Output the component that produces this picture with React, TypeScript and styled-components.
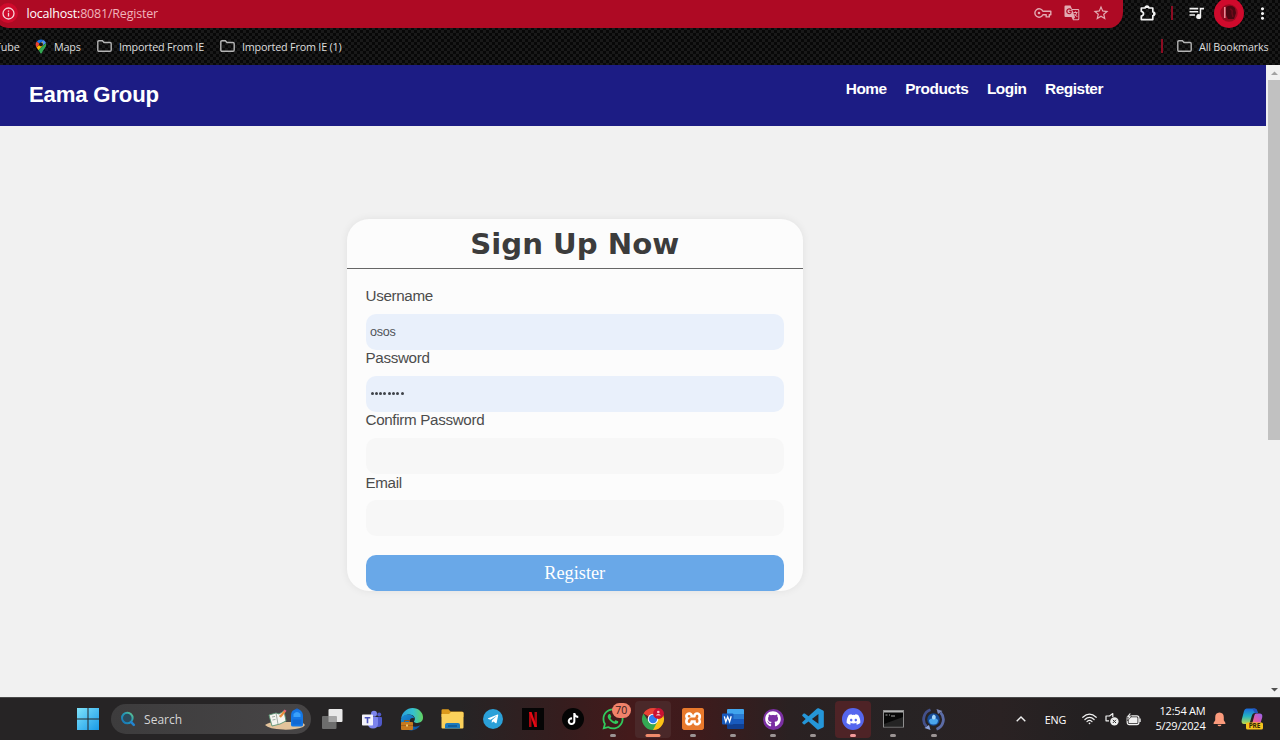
import React from 'react';
import styled, { createGlobalStyle } from 'styled-components';
import { MdMoreVert, MdStarOutline } from 'react-icons/md';
import { FaDiscord, FaGithub, FaTelegramPlane, FaTiktok, FaWhatsapp } from 'react-icons/fa';
import { SiXampp } from 'react-icons/si';
import { BiLogoVisualStudio } from 'react-icons/bi';

const GlobalStyle = createGlobalStyle`
  * { box-sizing: border-box; }
  body { margin: 0; overflow: hidden; background: #f1f1f1; }
`;

const ui = `"Open Sans", "Noto Sans", sans-serif`;
const arial = `"Liberation Sans", Arial, sans-serif`;

const Screen = styled.div`
  width: 1280px;
  height: 740px;
  display: flex;
  flex-direction: column;
  overflow: hidden;
`;

/* ---------- Browser chrome ---------- */

const Chrome = styled.div`
  height: 65px;
  flex: none;
  background-color: #090909;
  background-image: conic-gradient(#191919 25%, #080808 0 50%, #191919 0 75%, #080808 0);
  background-size: 6px 6px;
  font-family: ${ui};
`;

const AddressRow = styled.div`
  height: 28px;
  display: flex;
  align-items: flex-start;
`;

const Omnibox = styled.div`
  width: 1129px;
  height: 28px;
  margin-left: -6px;
  padding: 0 13px 2px 5px;
  display: flex;
  align-items: center;
  background: #ae0a24;
  border-radius: 0 0 14px 14px / 0 0 16px 16px;
  color: #f0b3bb;
`;

const InfoBadge = styled.div`
  width: 20px;
  height: 20px;
  margin-right: 8.5px;
  margin-left: -1px;
  border-radius: 50%;
  background: #cf0a2c;
  display: flex;
  align-items: center;
  justify-content: center;
`;

const Url = styled.div`
  flex: 1;
  font-size: 12.5px;
  letter-spacing: -0.2px;
  white-space: nowrap;
  span { color: #fff; }
`;

const OmniboxIcons = styled.div`
  display: flex;
  align-items: center;
  gap: 12px;
  color: #e3abb2;
`;

const BrowserActions = styled.div`
  height: 26px;
  display: flex;
  align-items: center;
  color: #f2f2f2;
`;

const Action = styled.div<{ $w: number; $shift?: number }>`
  width: ${(p) => p.$w}px;
  padding-left: ${(p) => p.$shift ?? 0}px;
  display: flex;
  justify-content: center;
`;

const RedDivider = styled.div`
  width: 2px;
  height: 14px;
  background: #8c0c22;
`;

const Avatar = styled.div`
  width: 30px;
  height: 30px;
  flex: none;
  border-radius: 50%;
  background: #cf0a2c;
  display: flex;
  align-items: center;
  justify-content: center;
`;

const BookmarkRow = styled.div`
  height: 36px;
  display: flex;
  align-items: center;
  color: #dedede;
  font-size: 10.8px;
`;

const Bookmark = styled.div<{ $w: number; $indent?: number; $end?: boolean }>`
  width: ${(p) => p.$w}px;
  padding-left: ${(p) => p.$indent ?? 0}px;
  display: flex;
  align-items: center;
  justify-content: ${(p) => (p.$end ? 'flex-end' : 'flex-start')};
  padding-right: ${(p) => (p.$end ? 15.5 : 0)}px;
  gap: 7px;
  letter-spacing: -0.2px;
  white-space: nowrap;
  flex: none;
`;

const Spacer = styled.div`
  flex: 1;
`;

/* ---------- Page ---------- */

const Viewport = styled.div`
  height: 632px;
  flex: none;
  display: flex;
  background: #f1f1f1;
`;

const Page = styled.div`
  width: 1266px;
  font-family: ${arial};
`;

const Header = styled.header`
  height: 61px;
  padding: 0 163px 0 29px;
  display: flex;
  justify-content: space-between;
  background: #1c1c84;
  color: #fff;
  font-weight: bold;
`;

const Brand = styled.div`
  font-size: 22.2px;
  letter-spacing: -0.2px;
  line-height: 60px;
`;

const Nav = styled.nav`
  display: flex;
  gap: 18.6px;
  font-size: 15.4px;
  letter-spacing: -0.46px;
  line-height: 18px;
  padding-top: 15px;
`;

const Card = styled.form`
  width: 455.5px;
  height: 372.5px;
  margin: 92.5px 0 0 347px;
  border-radius: 22px;
  background: #fcfcfc;
  box-shadow: 0 0 8px rgba(0, 0, 0, 0.07);
`;

const CardTitle = styled.h1`
  height: 50.5px;
  margin: 0;
  border-bottom: 1px solid #666;
  font: bold 29.2px/51px "DejaVu Sans", Verdana, sans-serif;
  color: #3c3c3c;
  text-align: center;
`;

const Fields = styled.div`
  padding: 18px 18.5px 0;
  display: flex;
  flex-direction: column;
`;

const Field = styled.label`
  height: 62.2px;
  font-size: 15.2px;
  letter-spacing: -0.33px;
  line-height: 17px;
  color: #4c4c4c;
  display: flex;
  flex-direction: column;
  gap: 9.8px;
`;

const Input = styled.div<{ $filled?: boolean }>`
  height: 36px;
  flex: none;
  padding: 0 4.5px;
  border-radius: 10px;
  background: ${(p) => (p.$filled ? '#e9f0fb' : '#f7f7f7')};
  color: #505358;
  font-size: 12.6px;
  letter-spacing: -0.3px;
  line-height: 36px;
`;

const Dots = styled.div`
  height: 35px;
  display: flex;
  align-items: center;
  gap: 1.3px;
  padding-left: 0.5px;
`;

const Dot = styled.i`
  width: 3px;
  height: 3px;
  border-radius: 50%;
  background: #3f4349;
`;

const Submit = styled.div`
  height: 36.5px;
  margin-top: 18.8px;
  border-radius: 10px;
  background: #69a8e8;
  color: #fff;
  font: 18.3px/36px "Liberation Serif", "Times New Roman", serif;
  text-align: center;
`;

const Scrollbar = styled.div`
  width: 14px;
  padding-left: 2px;
  background: #f1f1f1;
  display: flex;
  flex-direction: column;
  align-items: stretch;
`;

const ScrollArrow = styled.div`
  height: 15px;
  display: flex;
  align-items: center;
  justify-content: center;
`;

const Thumb = styled.div`
  height: 360px;
  background: #c1c1c1;
`;

/* ---------- Taskbar ---------- */

const Taskbar = styled.div`
  height: 43px;
  flex: none;
  padding-left: 68px;
  display: flex;
  border-top: 1px solid #4a4a4a;
  background: linear-gradient(90deg, #262425 0, #262425 460px, #351d1e 560px, #441a1b 630px, #3d1b1c 700px, #2a2122 790px, #272324 900px, #2a2223 1000px, #232021 1090px);
  color: #fff;
  font-family: ${ui};
`;

const Slot = styled.div<{ $active?: string; $running?: string }>`
  position: relative;
  width: 40.1px;
  height: 42px;
  flex: none;
  display: flex;
  align-items: center;
  justify-content: center;
  &::before {
    content: '';
    position: absolute;
    inset: 3px 2px 2px;
    border-radius: 4px;
    background: ${(p) => p.$active ?? 'transparent'};
  }
  &::after {
    content: '';
    position: absolute;
    left: 50%;
    bottom: 3.5px;
    width: ${(p) => (p.$running === '#f08a6c' ? 15 : 6)}px;
    height: 2.6px;
    border-radius: 2px;
    transform: translateX(-50%);
    background: ${(p) => p.$running ?? 'transparent'};
  }
  svg { position: relative; display: block; }
`;

const Search = styled.div`
  width: 200px;
  height: 30px;
  margin: 6px 1px 0 3px;
  padding: 0 5px 0 9px;
  border-radius: 15px;
  background: linear-gradient(90deg, #3d3c3d, #474546);
  display: flex;
  align-items: center;
  gap: 8px;
  font-size: 12px;
  color: #d6d6d6;
`;

const Disc = styled.div<{ $bg: string; $size?: number; $radius?: string }>`
  position: relative;
  width: ${(p) => p.$size ?? 21}px;
  height: ${(p) => p.$size ?? 21}px;
  border-radius: ${(p) => p.$radius ?? '50%'};
  background: ${(p) => p.$bg};
  display: flex;
  align-items: center;
  justify-content: center;
`;

const XamppTile = styled.div`
  position: relative;
  width: 22px;
  height: 22px;
  border-radius: 4px;
  background: radial-gradient(circle, #fff 0 9px, #e8792c 10px);
  color: #e8792c;
`;

const CountBadge = styled.div`
  position: absolute;
  z-index: 1;
  left: 19px;
  top: 5px;
  width: 19px;
  height: 15px;
  border-radius: 8px;
  background: #f0826a;
  color: #37211d;
  font-size: 10.5px;
  line-height: 15px;
  text-align: center;
`;

const TrayItem = styled.div<{ $w: number; $end?: number }>`
  width: ${(p) => p.$w}px;
  padding-right: ${(p) => p.$end ?? 0}px;
  display: flex;
  align-items: center;
  justify-content: center;
  flex: none;
  font-size: 10.8px;
  letter-spacing: -0.1px;
`;

const Clock = styled.div`
  width: 61.5px;
  flex: none;
  padding-top: 6px;
  text-align: right;
  font-size: 11px;
  line-height: 14.5px;
  letter-spacing: -0.22px;
  white-space: nowrap;
`;

/* ---------- Icons ---------- */

const KeyIcon = () => (
  <svg width="18" height="12" viewBox="0 0 18 12" fill="none" stroke="currentColor" strokeWidth="1.4">
    <path d="M8.900 4.300H16.800V7.700H15.300V9.900H12.200V7.700H8.900A4.200 4.200 0 1 1 8.900 4.300Z" strokeLinejoin="round" />
    <circle cx="5" cy="6" r="1.300" fill="currentColor" stroke="none" />
  </svg>
);

const TranslateIcon = () => (
  <svg width="16" height="16" viewBox="0 0 16 16" fill="none">
    <path d="M1.500.5H6.500L8 4H14Q15.300 4 15.300 5.300V14Q15.300 15.300 14 15.300H9L7.500 12H1.500Q.5 12 .5 11V1.500Q.5.5 1.500.5" fill="currentColor" />
    <path d="M8.300 5H13.800Q14.300 5 14.300 5.500V13.800Q14.300 14.300 13.800 14.300H9.500L11 12.500Z" fill="#ae0a24" />
    <path d="M7.200 4.800Q5.500 3.200 3.700 4.400 2 6 3.400 7.900 5.300 9.500 7 7.900L7.200 6.400H5.200" stroke="#ae0a24" strokeWidth="1.100" />
    <path d="M9.500 7.500H13.500M11.500 6.400V7.500M12.800 7.500Q12.300 10 10.200 11.500M10.500 9 13.300 12" stroke="currentColor" />
  </svg>
);

const ExtensionIcon = () => (
  <svg width="18" height="18" viewBox="0 0 18 18" fill="none" stroke="currentColor" strokeWidth="1.700" strokeLinejoin="round">
    <path d="M2.300 4H6.200Q6.300 2.100 8 2.100T9.800 4H13.800V8Q15.800 8.200 15.800 9.800T13.800 11.600V15.600H2.300V12.200Q4.500 11.700 4.500 9.800T2.300 7.400Z" />
    <path d="M6.900 3.200h2.200M14.800 8.700v2.200" strokeWidth="1.500" />
  </svg>
);

const MediaIcon = () => (
  <svg width="16" height="13" viewBox="0 0 16 13" fill="currentColor">
    <path d="M.5.800H9.200V2.400H.5ZM.5 4H9.200V5.600H.5ZM.5 7.200H6V8.800H.5Z" />
    <path d="M10.700.800H15V2.500H12.200V9.500A2.500 2.500 0 1 1 10.700 7.300Z" />
  </svg>
);

const Folder = () => (
  <svg width="15" height="12" viewBox="0 0 15 12" fill="none" stroke="#b5b5b5" strokeWidth="1.4">
    <path d="M.8 2Q.8.8 2 .8H5.4L7 2.5H13Q14.2 2.5 14.2 3.7V10Q14.2 11.2 13 11.2H2Q.8 11.2.8 10Z" />
  </svg>
);

const MapsPin = () => (
  <svg width="12" height="15" viewBox="0 0 12 15">
    <path d="M6 .5A5.2 5.2 0 0 0 1.8 2.6L4.3 4.8 8.3 1Q7.2.5 6 .5" fill="#1a73e8" />
    <path d="M8.3 1A5.2 5.2 0 0 1 11 4L7.6 6.8 4.6 4.5Z" fill="#4d91ef" />
    <path d="M1.8 2.6A5.2 5.2 0 0 0 1.6 8.6L4.8 4.9Z" fill="#ea4335" />
    <path d="M1.6 8.6 7.4 2.8 8 6.5 3.4 11.2Q2.5 9.8 1.6 8.6" fill="#fbbc04" />
    <path d="M11 4Q11.8 6.6 9.8 9.2 7.5 12 6.6 14.5H5.5Q4.8 12.8 3.4 11.1Z" fill="#34a853" />
    <circle cx="6" cy="5.4" r="1.9" fill="#171717" />
  </svg>
);

const AvatarArt = () => (
  <svg width="18" height="18" viewBox="0 0 18 18">
    <circle cx="9" cy="9" r="8.7" fill="#970a20" />
    <path d="M6 3q5-3 9 1l1 5-2 6H8L6 11Z" fill="#4a0711" />
    <path d="M4.800 3V14" stroke="#f09aa4" strokeWidth="1.4" />
    <path d="M10 5q3 1 2 4l1 4" stroke="#6b0a1a" strokeWidth="1.5" fill="none" />
  </svg>
);

const StartIcon = () => (
  <svg width="22" height="22" viewBox="0 0 22 22">
    <defs>
      <linearGradient id="win" x1="0" y1="0" x2="1" y2="1">
        <stop stopColor="#7fe3fb" />
        <stop offset="1" stopColor="#1899e8" />
      </linearGradient>
    </defs>
    <path d="M0 0h10.5v10.5H0ZM11.5 0H22v10.5H11.5ZM0 11.5h10.5V22H0ZM11.5 11.5H22V22H11.5Z" fill="url(#win)" />
  </svg>
);

const SearchIcon = () => (
  <svg width="16" height="16" viewBox="0 0 16 16" fill="none">
    <defs>
      <linearGradient id="mag" x1="0" y1="1" x2="1" y2="0">
        <stop stopColor="#1673b8" />
        <stop offset=".6" stopColor="#269bb5" />
        <stop offset="1" stopColor="#66c88a" />
      </linearGradient>
    </defs>
    <circle cx="7.3" cy="7" r="5.3" fill="#2c4a5c" stroke="url(#mag)" strokeWidth="2" />
    <path d="m11.200 11.200 2.600 2.600" stroke="#2385d0" strokeWidth="2.5" strokeLinecap="round" />
  </svg>
);

const SearchArt = () => (
  <svg width="42" height="22" viewBox="0 0 42 22">
    <path d="M1 17q4-3 11-3h24q4 1 5 3l-2 2q-8 3-20 2.6Q5 21 1 17" fill="#e3c39b" />
    <path d="m5 7 7-2 3 1 5-3 2 10-6 3-8 2Z" fill="#f5f5ef" stroke="#5b9474" strokeWidth=".9" />
    <path d="m12 5 2 11M8 9l3-.6M8.5 12l3-.6M15 8l4-1.3" stroke="#8b9a92" strokeWidth=".8" />
    <path d="m16 9 5-6" stroke="#e98b3b" strokeWidth="2.2" />
    <path d="m20.5 3.5 1-1.4" stroke="#de5c7a" strokeWidth="2.4" />
    <path d="M27 8q0-5 3-6 3-2 6 0 3 2 3 6v9q0 1.5-2 1.5h-8q-2 0-2-1.5Z" fill="#1577e4" />
    <path d="M29.5 6q3.5-4 7 0v3h-7Z" fill="#3aa1fa" />
    <path d="M28.500 11.500h9v5h-9Z" fill="#1268d2" />
    <path d="M31 2q2-2.5 4 0" fill="none" stroke="#1b66d0" />
  </svg>
);

const TaskViewIcon = () => (
  <svg width="21" height="20" viewBox="0 0 21 20">
    <rect x="6.5" width="14" height="13" rx="1" fill="#e9e9e9" />
    <rect y="7" width="14.5" height="13" rx="1" fill="#6d6d6d" />
    <path d="M6.5 7h8v6h-8Z" fill="#a6a6a6" />
  </svg>
);

const TeamsIcon = () => (
  <svg width="20" height="19" viewBox="0 0 20 19">
    <circle cx="12" cy="3.7" r="3" fill="#7b83eb" />
    <circle cx="17.2" cy="4.6" r="2" fill="#5059c9" />
    <path d="M13 7h6q1 0 1 1v5q0 4-4 4h-3Z" fill="#5059c9" />
    <path d="M6 7h9q1 0 1 1v5.500q0 5-5 5t-5-5Z" fill="#7b83eb" />
    <rect y="4.500" width="11" height="11" rx=".8" fill="#f3f3fa" />
    <path d="M2.700 7h5.600v1.500H6.300V13.200H4.700V8.500H2.700Z" fill="#4b53bc" />
  </svg>
);

const EdgeIcon = () => (
  <svg width="24" height="24" viewBox="0 0 24 24">
    <defs>
      <linearGradient id="edgeTop" x1="0" x2="1">
        <stop stopColor="#2aa0dc" />
        <stop offset=".55" stopColor="#35c1cf" />
        <stop offset="1" stopColor="#63d45f" />
      </linearGradient>
      <linearGradient id="edgeLow" x1="0" y1="0" x2="1" y2="1">
        <stop stopColor="#1a8fd8" />
        <stop offset="1" stopColor="#0c4f9e" />
      </linearGradient>
    </defs>
    <path d="M1 12C2 5 7 1 12.500 1 19 1 23.500 6 23 11c-.3 4-4 5.500-7.500 4.700-2-.5-1.700-1.300-1-2.200 1.500-3-1.400-6-5-6C5 7.500 2 10 1 12" fill="url(#edgeTop)" />
    <path d="M1 12C2 9 5 7 9 7.500c3 .2 5 2 5.200 4-3-1.500-5 1-4.500 4C10.500 20 16 21 20.500 18 17 24 9.500 25 5 21 2 19 .6 15.500 1 12" fill="url(#edgeLow)" />
    <rect x="1" y="15" width="12" height="8" rx="1" fill="#c77a1f" />
    <path d="M1 18.500h12" stroke="#9a5a17" strokeWidth=".7" />
    <path d="M4.500 15v-1.500h5V15" fill="none" stroke="#9c5b17" />
    <rect x="6" y="17.500" width="2" height="2" fill="#f2c66c" />
  </svg>
);

const ExplorerIcon = () => (
  <svg width="23" height="20" viewBox="0 0 23 20">
    <path d="M.5 1.500Q.5.300 1.700.300H7.500L9.500 2.500H21Q22.500 2.500 22.500 4V8H.5Z" fill="#dc9a1c" />
    <path d="M.5 5H8l2-2h11.500q1 0 1 1v14.500q0 1-1 1H1.500q-1 0-1-1Z" fill="#fbd15b" />
    <path d="M4 19.500V16q0-2 2-2h11q2 0 2 2v3.500Z" fill="#1b79bd" />
    <path d="M7 17h9" stroke="#0f568f" strokeWidth="1.500" />
  </svg>
);

const NetflixMark = () => (
  <svg width="8" height="15" viewBox="0 0 8 15">
    <path d="M0 0h2.500v15H0ZM5.500 0H8v15H5.500Z" fill="#a90710" />
    <path d="M0 0h2.500L8 15H5.500Z" fill="#e50914" />
  </svg>
);

const ChromeIcon = () => (
  <svg width="24" height="24" viewBox="0 0 24 24">
    <path d="M12 12 2.470 6.500A11 11 0 0 1 21.530 6.500H12Z" fill="#ea4335" />
    <path d="M12 12V23A11 11 0 0 0 21.530 6.500H12Z" fill="#fbc116" />
    <path d="M12 12 7.500 14.500 2.470 6.500A11 11 0 0 0 12 23L16.500 14.500Z" fill="#34a853" />
    <circle cx="12" cy="12" r="5.300" fill="#fff" />
    <circle cx="12" cy="12" r="4.200" fill="#2f7df0" />
    <circle cx="17.500" cy="6.500" r="5.400" fill="#cb1232" />
    <circle cx="17.300" cy="5" r="1.300" fill="#f5bfc6" />
    <path d="M14.800 8.500q2.500-2.800 5 0Z" fill="#f5bfc6" />
  </svg>
);

const WordIcon = () => (
  <svg width="22" height="20" viewBox="0 0 22 20">
    <path d="M6 0h15q1 0 1 1v4H5V1q0-1 1-1" fill="#41a5ee" />
    <path d="M5 5h17v5H5Z" fill="#2b7cd3" />
    <path d="M5 10h17v5H5Z" fill="#185abd" />
    <path d="M5 15h17v4q0 1-1 1H6q-1 0-1-1Z" fill="#103f91" />
    <rect y="4.500" width="11.500" height="11" rx="1" fill="#185abd" />
    <path d="m2.300 7.300 1.500 5.500L5.700 7.800l1.900 5L9.200 7.300" fill="none" stroke="#fff" strokeWidth="1.300" />
  </svg>
);

const TerminalIcon = () => (
  <svg width="21" height="18" viewBox="0 0 21 18">
    <rect x=".5" y=".5" width="20" height="16.500" fill="#070707" stroke="#8f8f8f" />
    <path d="M1 1h19v1.500H1Z" fill="#b3b3b3" />
    <path d="M2.500 5h2M6 5h1M8 6h4" stroke="#ccc" strokeWidth=".8" />
    <path d="M1 14 20 7v9.500H1Z" fill="#242424" />
  </svg>
);

const SyncIcon = () => (
  <svg width="23" height="23" viewBox="0 0 23 23" fill="none">
    <path d="M8.500 1.800A10.200 10.200 0 0 0 4.500 18.500" stroke="#43508a" strokeWidth="2.800" />
    <path d="M2.500 20 8.500 22 7 17Z" fill="#8ea4dc" />
    <path d="M14.500 21.200A10.200 10.200 0 0 0 18.500 4.500" stroke="#5c6ca6" strokeWidth="2.800" />
    <path d="M20.500 3 14.500 1 16 6Z" fill="#7b88b8" />
    <circle cx="11.500" cy="11.500" r="6.200" fill="#174c96" />
    <path d="M7 12q2-2 4.500-1.300Q14 9.500 16 12q0 4.500-4.500 4.500T7 12" fill="#4aa5ec" />
    <path d="M10 10.500q-.5-3 1.800-4 2.700 1 1.700 4-1.500 2-3.500 0" fill="#a5d8fb" />
  </svg>
);

const WifiIcon = () => (
  <svg width="15" height="12" viewBox="0 0 15 12" fill="none" stroke="#f0f0f0" strokeWidth="1.200" strokeLinecap="round">
    <path d="M.8 4.300Q7.500-2 14.200 4.300M2.900 6.500Q7.500 2.100 12.100 6.500M5 8.600Q7.500 6.300 10 8.600" />
    <circle cx="7.500" cy="10.300" r=".9" fill="#f0f0f0" stroke="none" />
  </svg>
);

const MuteIcon = () => (
  <svg width="14" height="14" viewBox="0 0 14 14" fill="none">
    <path d="M7.800 5V1.500L4.500 4H1V8.800H4" stroke="#f0f0f0" strokeWidth="1.200" strokeLinejoin="round" />
    <circle cx="9.400" cy="9.400" r="4.200" fill="#ededed" />
    <path d="m7.800 7.800 3.200 3.200m0-3.200-3.200 3.200" stroke="#333" />
  </svg>
);

const BatteryIcon = () => (
  <svg width="15" height="13" viewBox="0 0 15 13">
    <rect x="1.200" y="2.800" width="11.700" height="8.800" rx="2" fill="none" stroke="#f0f0f0" strokeWidth="1.200" />
    <rect x="2.600" y="4.200" width="8.900" height="6" rx=".8" fill="#f0f0f0" />
    <path d="M13.300 5.500h1.400v3.500h-1.400Z" fill="#f0f0f0" />
    <path d="M3.600 0 .2 4.400H2.300L1.400 8 5.800 3H3.700L5 0Z" fill="#f0f0f0" stroke="#262324" strokeWidth=".6" />
  </svg>
);

const BellIcon = () => (
  <svg width="13" height="15" viewBox="0 0 13 15" fill="#fa9a7c">
    <path d="M6.500.5q4.300.3 4.300 4.700v3L12.500 11q.2 1-.7 1H1.200q-.9 0-.7-1L2.200 8.200v-3Q2.200.8 6.500.500" />
    <path d="M4.500 12.700h4q-.4 1.600-2 1.600t-2-1.600" />
  </svg>
);

const CopilotIcon = () => (
  <svg width="23" height="22" viewBox="0 0 23 22">
    <defs>
      <linearGradient id="coA" x1="0" y1="0" x2="0" y2="1">
        <stop stopColor="#1b69dc" />
        <stop offset=".5" stopColor="#24b3c2" />
        <stop offset="1" stopColor="#bcd84a" />
      </linearGradient>
      <linearGradient id="coB" x1="1" y1="0" x2="0" y2="1">
        <stop stopColor="#9464ef" />
        <stop offset=".5" stopColor="#e159a7" />
        <stop offset="1" stopColor="#f59a51" />
      </linearGradient>
    </defs>
    <path d="M5.500.5h8q2 0 2.600 2l.7 2.500h-3q-2 0-2.700 2L9 14q-.6 2-2.600 2H3Q0 16 .7 12L3 3Q3.700.5 5.500.5" fill="url(#coA)" />
    <path d="M15 5.500h3.500q3.500 0 2.700 4L19.500 15q-.7 3-3.500 3H8q2.500 0 3.200-2.500L13.500 7q.4-1.500 1.500-1.500" fill="url(#coB)" />
    <path d="M11.500.5h2q2 0 2.600 2l.7 2.500h-3Z" fill="#2353bc" />
    <rect x="5" y="14.500" width="17" height="7" rx="1.500" fill="#f6c21c" />
    <text x="13.500" y="20.400" fontSize="6.500" fontWeight="700" fontFamily="Open Sans, sans-serif" textAnchor="middle" fill="#322508">PRE</text>
  </svg>
);

const idle = '#9b9494';

export default function App() {
  return (
    <Screen>
      <GlobalStyle />
      <Chrome>
        <AddressRow>
          <Omnibox>
            <InfoBadge>
              <svg width="13" height="13" viewBox="0 0 13 13" fill="none" stroke="#f6d5d9" strokeWidth="1.300">
                <circle cx="6.500" cy="6.500" r="5.500" />
                <path d="M6.500 5.800v3.600M6.500 3.500v1.300" />
              </svg>
            </InfoBadge>
            <Url><span>localhost:</span>8081/Register</Url>
            <OmniboxIcons>
              <KeyIcon />
              <TranslateIcon />
              <MdStarOutline size={18} />
            </OmniboxIcons>
          </Omnibox>
          <BrowserActions>
            <Action $w={48} $shift={2}><ExtensionIcon /></Action>
            <RedDivider />
            <Action $w={41} $shift={6}><MediaIcon /></Action>
            <Avatar><AvatarArt /></Avatar>
            <Action $w={36}><MdMoreVert size={19} /></Action>
          </BrowserActions>
        </AddressRow>
        <BookmarkRow>
          <Bookmark $w={35} $end>Tube</Bookmark>
          <Bookmark $w={62}><MapsPin />Maps</Bookmark>
          <Bookmark $w={123}><Folder />Imported From IE</Bookmark>
          <Bookmark $w={130}><Folder />Imported From IE (1)</Bookmark>
          <Spacer />
          <RedDivider />
          <Bookmark $w={117} $indent={14}><Folder />All Bookmarks</Bookmark>
        </BookmarkRow>
      </Chrome>

      <Viewport>
        <Page>
          <Header>
            <Brand>Eama Group</Brand>
            <Nav>
              <span>Home</span>
              <span>Products</span>
              <span>Login</span>
              <span>Register</span>
            </Nav>
          </Header>
          <Card>
            <CardTitle>Sign Up Now</CardTitle>
            <Fields>
              <Field>Username<Input $filled>osos</Input></Field>
              <Field>
                Password
                <Input $filled>
                  <Dots>{Array.from({ length: 8 }, (_, i) => <Dot key={i} />)}</Dots>
                </Input>
              </Field>
              <Field>Confirm Password<Input /></Field>
              <Field>Email<Input /></Field>
              <Submit>Register</Submit>
            </Fields>
          </Card>
        </Page>
        <Scrollbar>
          <ScrollArrow>
            <svg width="7" height="4" viewBox="0 0 7 4"><path d="M0 4 3.500.5 7 4Z" fill="#a3a3a3" /></svg>
          </ScrollArrow>
          <Thumb />
          <Spacer />
          <ScrollArrow>
            <svg width="7" height="4" viewBox="0 0 7 4"><path d="M0 0 3.500 3.500 7 0Z" fill="#505050" /></svg>
          </ScrollArrow>
        </Scrollbar>
      </Viewport>

      <Taskbar>
        <Slot><StartIcon /></Slot>
        <Search>
          <SearchIcon />
          <span>Search</span>
          <Spacer />
          <SearchArt />
        </Search>
        <Slot><TaskViewIcon /></Slot>
        <Slot><TeamsIcon /></Slot>
        <Slot><EdgeIcon /></Slot>
        <Slot><ExplorerIcon /></Slot>
        <Slot><Disc $bg="#2ba0d8" $size={20}><FaTelegramPlane size={12} /></Disc></Slot>
        <Slot><Disc $bg="#050505" $size={22} $radius="0"><NetflixMark /></Disc></Slot>
        <Slot><Disc $bg="#050505" $size={22}><FaTiktok size={12} /></Disc></Slot>
        <Slot $running={idle}><FaWhatsapp size={24} color="#31c95c" /><CountBadge>70</CountBadge></Slot>
        <Slot $active="#4a2829" $running="#f08a6c"><ChromeIcon /></Slot>
        <Slot $running={idle}><XamppTile><SiXampp size={22} /></XamppTile></Slot>
        <Slot $running={idle}><WordIcon /></Slot>
        <Slot $running={idle}><Disc $bg="#7b2fa3"><FaGithub size={16} /></Disc></Slot>
        <Slot $running={idle}><BiLogoVisualStudio size={26} color="#2596d8" /></Slot>
        <Slot $active="#4e2326" $running="#f39a9a"><Disc $bg="#5566ee" $size={22}><FaDiscord size={15} /></Disc></Slot>
        <Slot $running={idle}><TerminalIcon /></Slot>
        <Slot $running={idle}><SyncIcon /></Slot>
        <Spacer />
        <TrayItem $w={26}>
          <svg width="10" height="6" viewBox="0 0 10 6" fill="none" stroke="#f0f0f0" strokeWidth="1.400"><path d="m.7 5.300 4.300-4.300 4.300 4.300" /></svg>
        </TrayItem>
        <TrayItem $w={43}>ENG</TrayItem>
        <TrayItem $w={24}><WifiIcon /></TrayItem>
        <TrayItem $w={22}><MuteIcon /></TrayItem>
        <TrayItem $w={21}><BatteryIcon /></TrayItem>
        <Clock>12:54 AM<br />5/29/2024</Clock>
        <TrayItem $w={28}><BellIcon /></TrayItem>
        <TrayItem $w={46.5} $end={8}><CopilotIcon /></TrayItem>
      </Taskbar>
    </Screen>
  );
}
